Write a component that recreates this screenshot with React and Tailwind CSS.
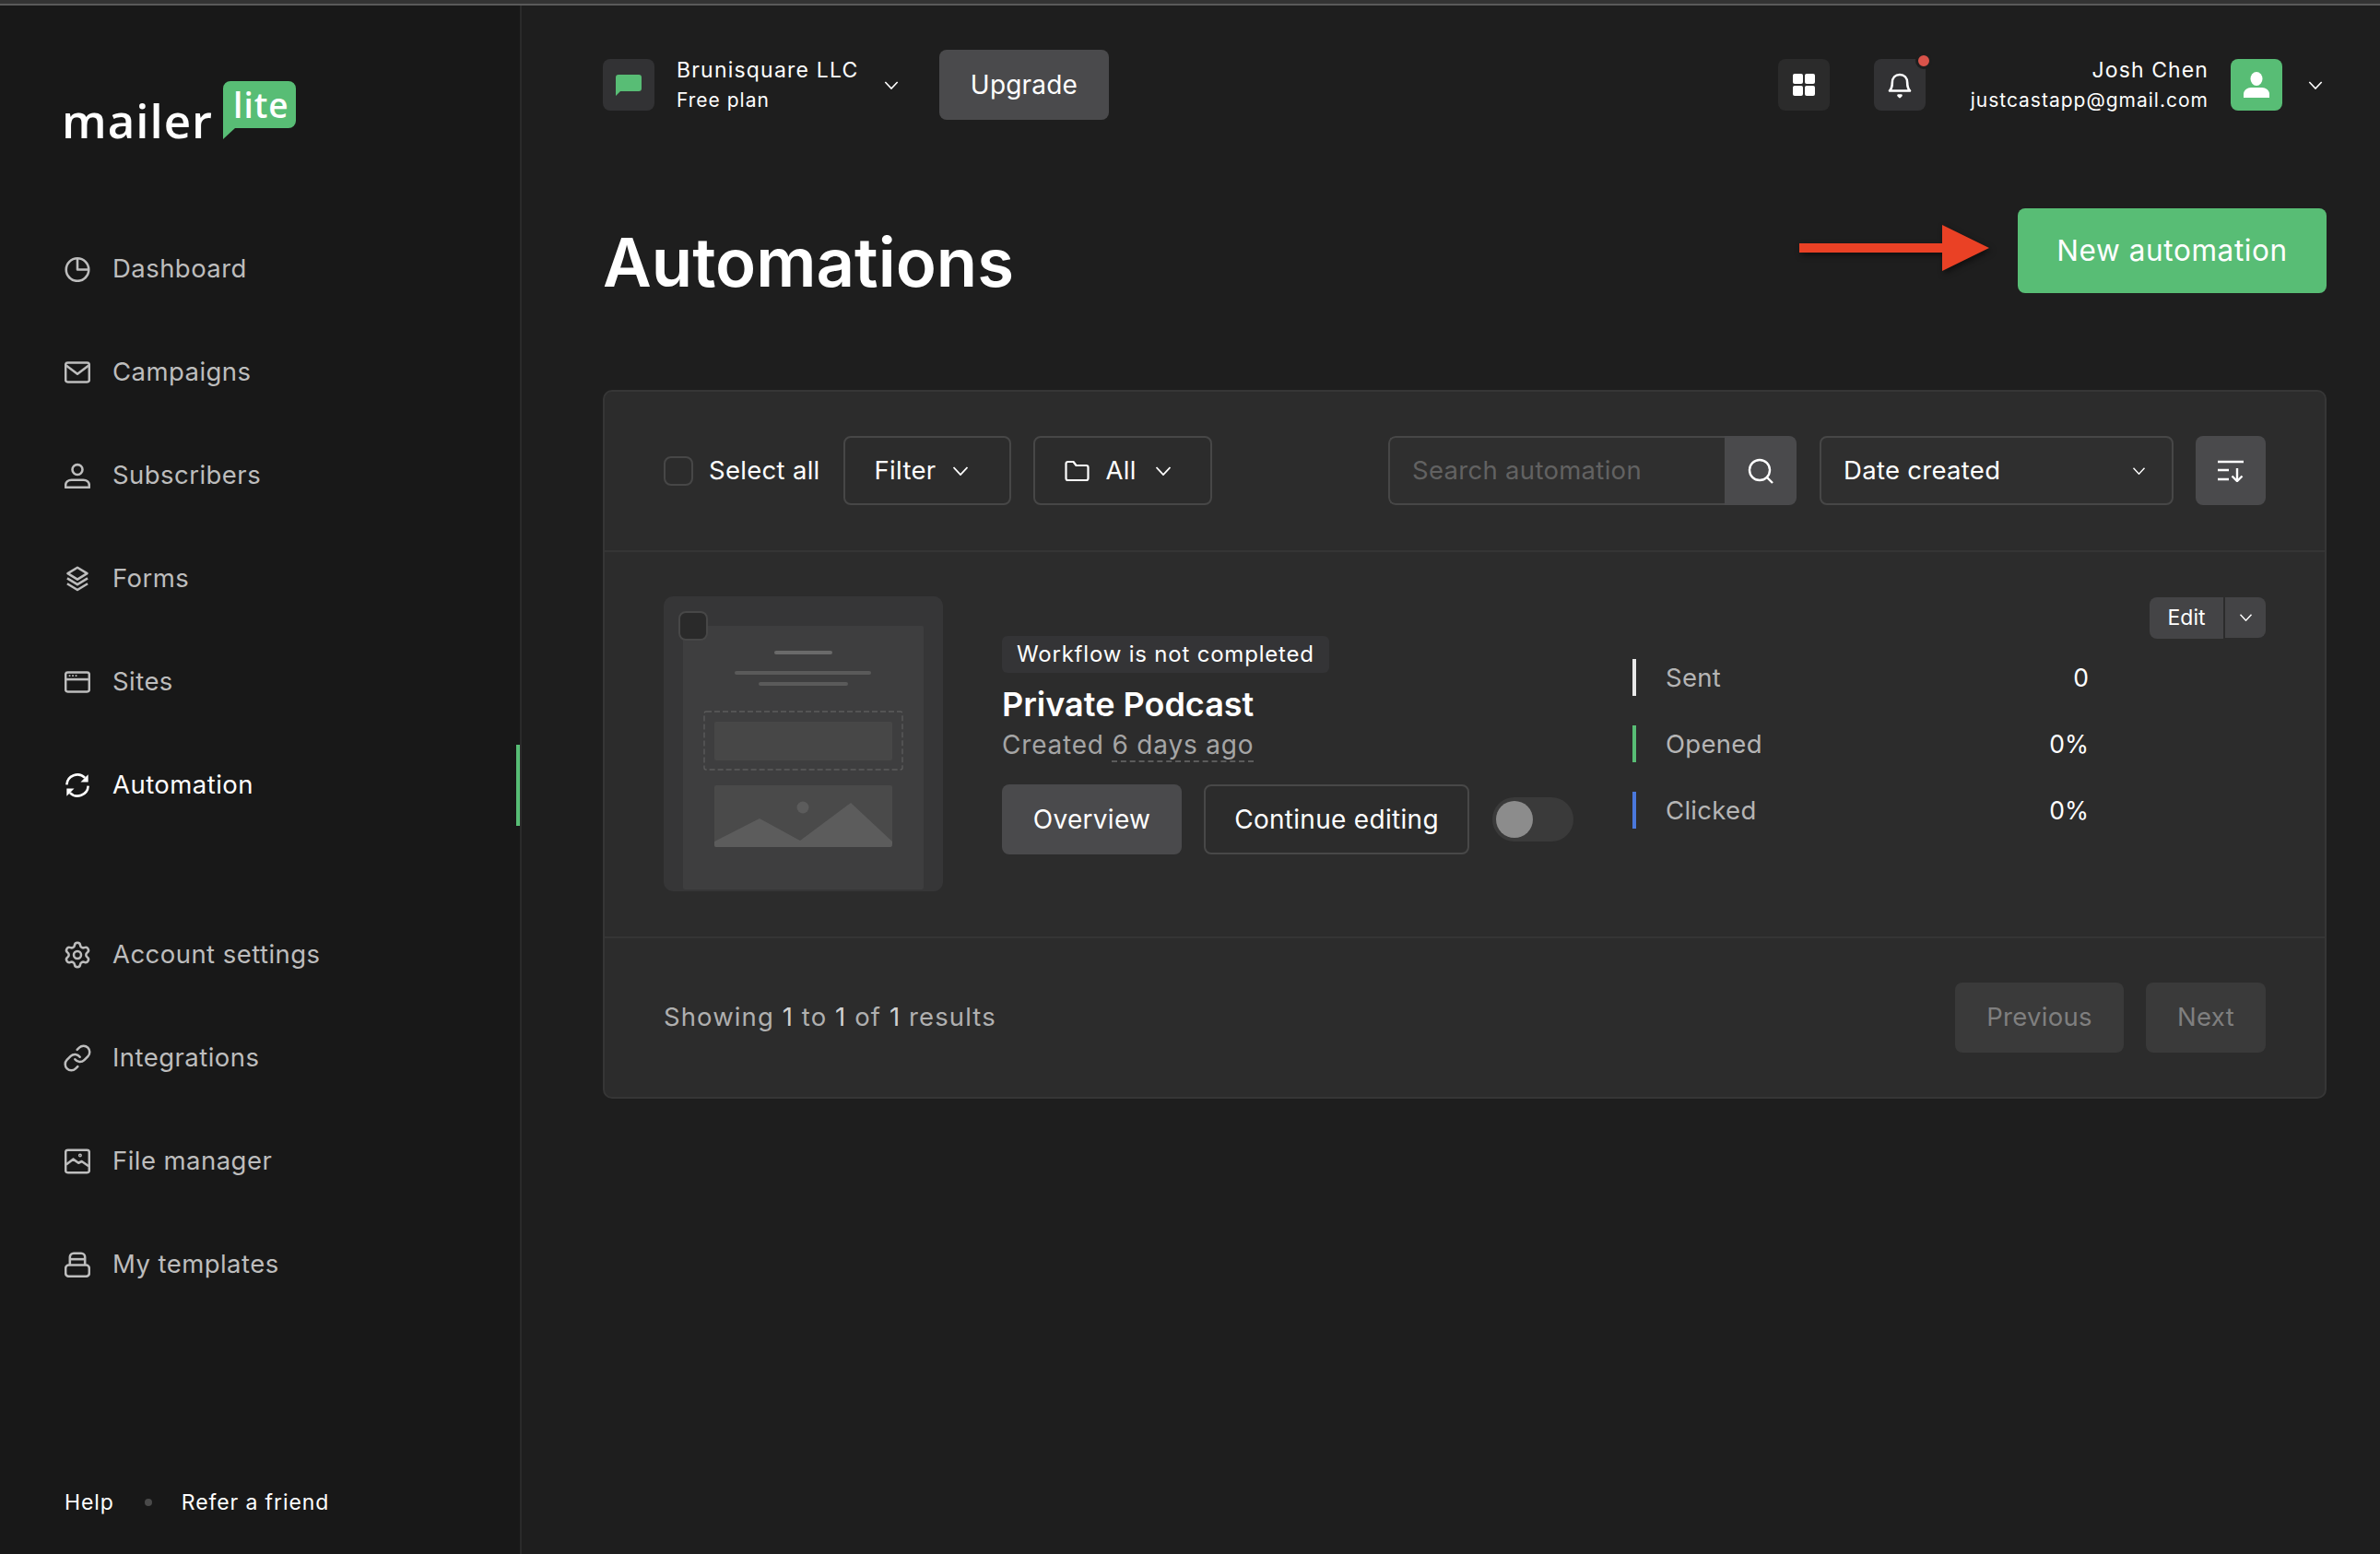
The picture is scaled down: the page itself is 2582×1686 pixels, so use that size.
import { Settings, Link } from 'lucide-react';

const Chevron = ({ className = 'w-[18px] h-[10px]' }) => (
  <svg viewBox="0 0 18 10" className={className} fill="none" stroke="currentColor" strokeWidth="1.8">
    <path d="M1.5 1 9 9l7.5-8" />
  </svg>
);

const NavIcon = ({ children }) => (
  <svg viewBox="0 0 24 24" className="w-[28px] h-[28px]" fill="none" stroke="currentColor" strokeWidth="2.2" strokeLinejoin="round">
    {children}
  </svg>
);

const mainNav = [
  {
    label: 'Dashboard',
    icon: (
      <NavIcon>
        <circle cx="12" cy="12.5" r="10.5" />
        <path d="M12 2v10.5h10" />
      </NavIcon>
    ),
  },
  {
    label: 'Campaigns',
    icon: (
      <NavIcon>
        <rect x="1" y="3" width="22" height="18" rx="2" />
        <path d="M1.5 5.5 12 13.5l10.5-8" />
      </NavIcon>
    ),
  },
  {
    label: 'Subscribers',
    icon: (
      <NavIcon>
        <circle cx="12" cy="6.5" r="4.7" />
        <path d="M1 23v-2c0-3.2 2.6-5 5.5-5h11c2.9 0 5.5 1.8 5.5 5v2z" />
      </NavIcon>
    ),
  },
  {
    label: 'Forms',
    icon: (
      <NavIcon>
        <path d="M12 1.5 21 7l-9 5.5L3 7z" />
        <path d="m2.5 11.5 9.5 5.8 9.500-5.800" />
        <path d="m2.5 16.5 9.5 5.8 9.500-5.800" />
      </NavIcon>
    ),
  },
  {
    label: 'Sites',
    icon: (
      <NavIcon>
        <rect x="1" y="3" width="22" height="18" rx="2" />
        <path d="M1 9.5h22" />
        <path d="M4 6.2h1.5M7 6.2h1.5M10 6.2h1.5" strokeWidth="1.5" />
      </NavIcon>
    ),
  },
  {
    label: 'Automation',
    active: true,
    icon: (
      <NavIcon>
        <path d="M2 11.5A10 10 0 0 1 19 5" />
        <path d="M22 12.5A10 10 0 0 1 5 19" />
        <path d="M22 2v7h-7zM2 22v-7h7z" fill="currentColor" stroke="none" />
      </NavIcon>
    ),
  },
];

const accountNav = [
  { label: 'Account settings', icon: <Settings className="-m-[2px] w-[32px] h-[32px]" strokeWidth={1.9} /> },
  { label: 'Integrations', icon: <Link className="-m-[2px] w-[32px] h-[32px]" strokeWidth={1.9} /> },
  {
    label: 'File manager',
    icon: (
      <NavIcon>
        <rect x="1" y="1.5" width="22" height="21" rx="2" />
        <path d="m1.5 15 6.5-5 5 3.5 3-1.5 6.5 4.5" />
        <circle cx="14.5" cy="6.5" r="0.6" />
      </NavIcon>
    ),
  },
  {
    label: 'My templates',
    icon: (
      <NavIcon>
        <rect x="1" y="12.5" width="22" height="10.5" rx="3" />
        <path d="M5 12.500V5a3.5 3.5 0 0 1 3.5-3.5h7A3.500 3.500 0 0 1 19 5v7.500" />
        <path d="M5 7h14" />
      </NavIcon>
    ),
  },
];

const NavItem = ({ item }) => (
  <li className={`relative flex h-[112px] items-center gap-[24px] pl-[70px] ${item.active ? 'text-white' : 'text-[#bdbdbd]'}`}>
    {item.icon}
    <span className="text-[27.5px] tracking-[0.45px]">{item.label}</span>
    {item.active ? <span className="absolute right-0 top-[12px] h-[88px] w-[4px] bg-[#58bd75]" /> : null}
  </li>
);

const Sidebar = () => (
  <aside className="flex w-[566px] shrink-0 flex-col border-r-2 border-[#2a2a2a] bg-[#181818]">
    <div className="flex h-[230px] items-start gap-[11px] pl-[67px] pt-[82px]">
      <span className="mt-[11px] text-[51px] font-semibold leading-[62px] tracking-[1px] text-white [font-family:'Open_Sans',sans-serif]">mailer</span>
      <div className="relative h-[63px] w-[79px]">
        <svg viewBox="0 0 79 63" className="h-full w-full">
          <path d="M8 0h63a8 8 0 0 1 8 8v35a8 8 0 0 1-8 8H13L0 63V8a8 8 0 0 1 8-8z" fill="#58bd75" />
        </svg>
        <span className="absolute left-[11px] top-[3px] text-[37px] font-semibold leading-[46px] tracking-[1px] text-white [font-family:'Open_Sans',sans-serif]">lite</span>
      </div>
    </div>
    <ul>
      {mainNav.map((item) => (
        <NavItem key={item.label} item={item} />
      ))}
    </ul>
    <ul className="mt-[72px]">
      {accountNav.map((item) => (
        <NavItem key={item.label} item={item} />
      ))}
    </ul>
    <div className="mt-auto flex items-center pb-[42px] pl-[70px] text-[23px] leading-[28px] tracking-[0.9px] text-white">
      <span>Help</span>
      <span className="ml-[33px] mr-[32px] h-[8px] w-[8px] rounded-full bg-[#4a4a4a]" />
      <span>Refer a friend</span>
    </div>
  </aside>
);

const TopBar = () => (
  <header className="flex items-center justify-between">
    <div className="flex items-center">
      <div className="flex h-[56px] w-[56px] items-center justify-center rounded-[8px] bg-[#323234]">
        <svg viewBox="0 0 28 23" className="h-[23px] w-[28px]">
          <path d="M3 0h22a3 3 0 0 1 3 3v12a3 3 0 0 1-3 3H5l-5 5V3a3 3 0 0 1 3-3z" fill="#58bd75" />
        </svg>
      </div>
      <div className="ml-[24px] w-[225px] text-white">
        <div className="text-[23px] leading-[32px] tracking-[1.2px]">Brunisquare LLC</div>
        <div className="mt-[1px] text-[21px] leading-[32px] tracking-[1px]">Free plan</div>
      </div>
      <Chevron className="h-[9px] w-[16px] text-white" />
      <button className="ml-[44px] h-[76px] w-[184px] rounded-[8px] bg-[#4a4a4c] text-[28px] tracking-[0.2px] text-white">Upgrade</button>
    </div>
    <div className="flex items-center">
      <div className="flex h-[56px] w-[56px] items-center justify-center rounded-[8px] bg-[#2b2b2b]">
        <div className="grid grid-cols-2 gap-[2px]">
          <span className="h-[11px] w-[11px] rounded-[2px] bg-white" />
          <span className="h-[11px] w-[11px] rounded-[2px] bg-white" />
          <span className="h-[11px] w-[11px] rounded-[2px] bg-white" />
          <span className="h-[11px] w-[11px] rounded-[2px] bg-white" />
        </div>
      </div>
      <div className="relative ml-[48px] flex h-[56px] w-[56px] items-center justify-center rounded-[8px] bg-[#323234]">
        <svg viewBox="0 0 26 30" className="h-[30px] w-[26px]" fill="none" stroke="white" strokeWidth="2.6" strokeLinejoin="round">
          <path d="M2 21.5c2-2 2.8-3.5 2.8-8.5 0-5.5 3.4-9 8.2-9s8.2 3.5 8.2 9c0 5 .8 6.5 2.8 8.5z" />
          <path d="M11.5 26.5h3l-1.5 1.5z" fill="white" />
        </svg>
        <span className="absolute right-[-7px] top-[-7px] h-[12px] w-[12px] rounded-full border-[3px] border-[#1e1e1e] bg-[#d9534a] [box-sizing:content-box]" />
      </div>
      <div className="ml-[46px] w-[261px] text-right text-white">
        <div className="text-[23px] leading-[32px] tracking-[1.1px]">Josh Chen</div>
        <div className="mt-[1px] text-[21px] leading-[32px] tracking-[1px]">justcastapp@gmail.com</div>
      </div>
      <div className="ml-[24px] flex h-[56px] w-[56px] items-center justify-center rounded-[8px] bg-[#58bd75]">
        <svg viewBox="0 0 28 28" className="h-[28px] w-[28px]" fill="white">
          <ellipse cx="14" cy="7.5" rx="6.5" ry="7.5" />
          <path d="M0 28v-4c0-4 4-7 8-7h12c4 0 8 3 8 7v4z" />
        </svg>
      </div>
      <Chevron className="ml-[28px] mr-[4px] h-[9px] w-[16px] text-white" />
    </div>
  </header>
);

const Thumbnail = () => (
  <div className="relative h-[320px] w-[303px] shrink-0 overflow-hidden rounded-[10px] bg-[#363637]">
    <svg viewBox="0 0 303 320" className="h-full w-full">
      <rect x="21" y="32" width="261" height="286" rx="2" fill="#3e3e3f" />
      <rect x="120" y="59" width="63" height="4" rx="2" fill="#6a6a6a" />
      <rect x="77" y="81" width="148" height="4" rx="2" fill="#5a5a5a" />
      <rect x="103" y="93" width="97" height="4" rx="2" fill="#5a5a5a" />
      <rect x="44" y="125" width="215" height="63" rx="2" fill="none" stroke="#5c5c5c" strokeWidth="1.3" strokeDasharray="6 3" />
      <rect x="55" y="136" width="193" height="42" rx="2" fill="#474747" />
      <rect x="55" y="205" width="193" height="67" rx="2" fill="#4a4a4a" />
      <circle cx="151" cy="229" r="6.5" fill="#5c5c5c" />
      <path d="M55 266l49-25 44 24 55-41 45 42v3a3 3 0 0 1-2 3H57a2 2 0 0 1-2-2z" fill="#5c5c5c" />
    </svg>
    <span className="absolute left-[16px] top-[16px] h-[32px] w-[32px] rounded-[8px] border-2 border-[#474747] bg-[#2a2a2a]" />
  </div>
);

const Stat = ({ label, value, bar }) => (
  <div className="flex h-[40px] items-center justify-between">
    <div className="flex items-center gap-[32px]">
      <span className={`h-[40px] w-[4px] ${bar}`} />
      <span className="text-[27.5px] tracking-[0.3px] text-[#b5b5b5]">{label}</span>
    </div>
    <span className="text-[26.5px] text-white">{value}</span>
  </div>
);

const AutomationRow = () => (
  <div className="flex h-[419px] items-start border-b-2 border-[#353535] pl-[64px] pr-[64px] pt-[48px]">
    <Thumbnail />
    <div className="ml-[64px] mt-[43px] w-[620px]">
      <span className="block h-[40px] w-fit rounded-[6px] bg-[#343436] px-[16px] text-[24px] leading-[40px] tracking-[0.8px] text-white">Workflow is not completed</span>
      <h2 className="mt-[11px] text-[36px] font-semibold leading-[46px] text-white">Private Podcast</h2>
      <p className="mt-[4px] text-[28px] leading-[34px] tracking-[0.8px] text-[#a5a5a5]">
        Created <span className="border-b-2 border-dashed border-[#5c5c5c]">6 days ago</span>
      </p>
      <div className="mt-[26px] flex items-center">
        <button className="h-[76px] w-[195px] rounded-[8px] bg-[#4a4a4c] text-[28px] tracking-[0.3px] text-white">Overview</button>
        <button className="ml-[24px] h-[76px] w-[288px] rounded-[8px] border-2 border-[#484848] text-[28px] tracking-[0.3px] text-white">Continue editing</button>
        <div className="ml-[25px] flex h-[48px] w-[88px] items-center rounded-full bg-[#3a3a3a] pl-[4px]">
          <span className="h-[40px] w-[40px] rounded-full bg-[#8c8c8c]" />
        </div>
      </div>
    </div>
    <div className="ml-[64px] mt-[68px] flex w-[495px] flex-col gap-[32px] leading-[40px]">
      <Stat label="Sent" value="0" bar="bg-[#e8e8e8]" />
      <Stat label="Opened" value="0%" bar="bg-[#58bd75]" />
      <Stat label="Clicked" value="0%" bar="bg-[#4a78dc]" />
    </div>
    <div className="ml-auto mt-[1px] flex h-[45px] gap-[2px] text-white">
      <span className="flex h-[45px] w-[80px] items-center justify-center rounded-l-[8px] bg-[#444446] text-[23px]">Edit</span>
      <span className="flex h-[44px] w-[44px] items-center justify-center rounded-r-[8px] bg-[#444446]">
        <Chevron className="h-[8px] w-[15px]" />
      </span>
    </div>
  </div>
);

const Toolbar = () => (
  <div className="flex items-center justify-between border-b-2 border-[#353535] pb-[49px] pl-[64px] pr-[64px] pt-[48px] text-[27.5px] tracking-[0.3px] text-white">
    <div className="flex items-center">
      <span className="h-[32px] w-[32px] rounded-[8px] border-2 border-[#474747]" />
      <span className="ml-[17px]">Select all</span>
      <button className="ml-[25px] flex h-[75px] w-[182px] items-center gap-[18px] rounded-[8px] border-2 border-[#474747] pl-[32px]">
        Filter
        <Chevron />
      </button>
      <button className="ml-[24px] flex h-[75px] w-[194px] items-center rounded-[8px] border-2 border-[#474747] pl-[32px]">
        <svg viewBox="0 0 28 24" className="h-[24px] w-[28px]" fill="none" stroke="white" strokeWidth="2.2" strokeLinejoin="round">
          <path d="M1.5 4a2 2 0 0 1 2-2h6l3 4h11a2 2 0 0 1 2 2v12a2 2 0 0 1-2 2h-20a2 2 0 0 1-2-2z" />
        </svg>
        <span className="ml-[17px]">All</span>
        <Chevron className="ml-[20px] h-[10px] w-[18px]" />
      </button>
    </div>
    <div className="flex items-center">
      <div className="flex h-[75px] w-[443px] overflow-hidden rounded-[8px]">
        <div className="flex flex-1 items-center rounded-l-[8px] border-2 border-r-0 border-[#474747] bg-[#2f2f2f] pl-[24px] text-[#626262]">Search automation</div>
        <div className="flex w-[78px] items-center justify-center bg-[#4a4a4c]">
          <svg viewBox="0 0 28 28" className="h-[28px] w-[28px]" fill="none" stroke="white" strokeWidth="2.4">
            <circle cx="13" cy="13" r="11" />
            <path d="m21 21 6 6" />
          </svg>
        </div>
      </div>
      <div className="ml-[25px] flex h-[75px] w-[384px] items-center justify-between rounded-[8px] border-2 border-[#474747] bg-[#2f2f2f] pl-[24px] pr-[28px]">
        Date created
        <Chevron className="h-[8px] w-[15px]" />
      </div>
      <button className="ml-[24px] flex h-[75px] w-[76px] items-center justify-center rounded-[8px] bg-[#4a4a4c]">
        <svg viewBox="0 0 28 24" className="h-[24px] w-[28px]" fill="none" stroke="white" strokeWidth="2.4">
          <path d="M0 2h28M0 11h12M0 21h12M21 9v14" />
          <path d="m15.5 17.5 5.5 5.5 5.5-5.5" />
        </svg>
      </button>
    </div>
  </div>
);

const Pagination = () => (
  <div className="flex h-[172px] items-center justify-between pl-[64px] pr-[64px] text-[27.5px]">
    <p className="tracking-[1.1px] text-[#b0b0b0]">
      Showing <span className="text-[#d0d0d0]">1</span> to <span className="text-[#d0d0d0]">1</span> of <span className="text-[#d0d0d0]">1</span> results
    </p>
    <div className="flex gap-[24px] tracking-[0.3px] text-[#7f7f7f]">
      <button className="h-[76px] w-[183px] rounded-[8px] bg-[#3a3a3a]">Previous</button>
      <button className="h-[76px] w-[130px] rounded-[8px] bg-[#3a3a3a]">Next</button>
    </div>
  </div>
);

const App = () => (
  <div className="flex h-[1686px] flex-col overflow-hidden bg-[#1e1e1e] [font-family:Inter,sans-serif]">
    <div className="h-[6px] shrink-0 border-b-2 border-[#5a5a5a] bg-[#333333]" />
    <div className="flex min-h-0 flex-1">
      <Sidebar />
      <main className="flex-1 pl-[88px] pr-[58px] pt-[48px]">
        <TopBar />
        <div className="mt-[96px] flex items-start justify-between">
          <h1 className="mt-[15px] text-[72.5px] font-semibold leading-[88px] text-white">Automations</h1>
          <div className="flex items-center gap-[31px]">
            <svg viewBox="0 0 206 50" className="mb-[6px] h-[50px] w-[206px] drop-shadow-[2px_3px_3px_rgba(0,0,0,0.5)]">
              <path d="M0 20h155V0l51 25-51 25V30H0z" fill="#ea4125" />
            </svg>
            <button className="h-[92px] w-[335px] rounded-[8px] bg-[#58bd75] text-[31.5px] tracking-[0.6px] text-white">New automation</button>
          </div>
        </div>
        <section className="mt-[94px] overflow-hidden rounded-[10px] border-2 border-[#363636] bg-[#2c2c2c]">
          <Toolbar />
          <AutomationRow />
          <Pagination />
        </section>
      </main>
    </div>
  </div>
);

export default App;
